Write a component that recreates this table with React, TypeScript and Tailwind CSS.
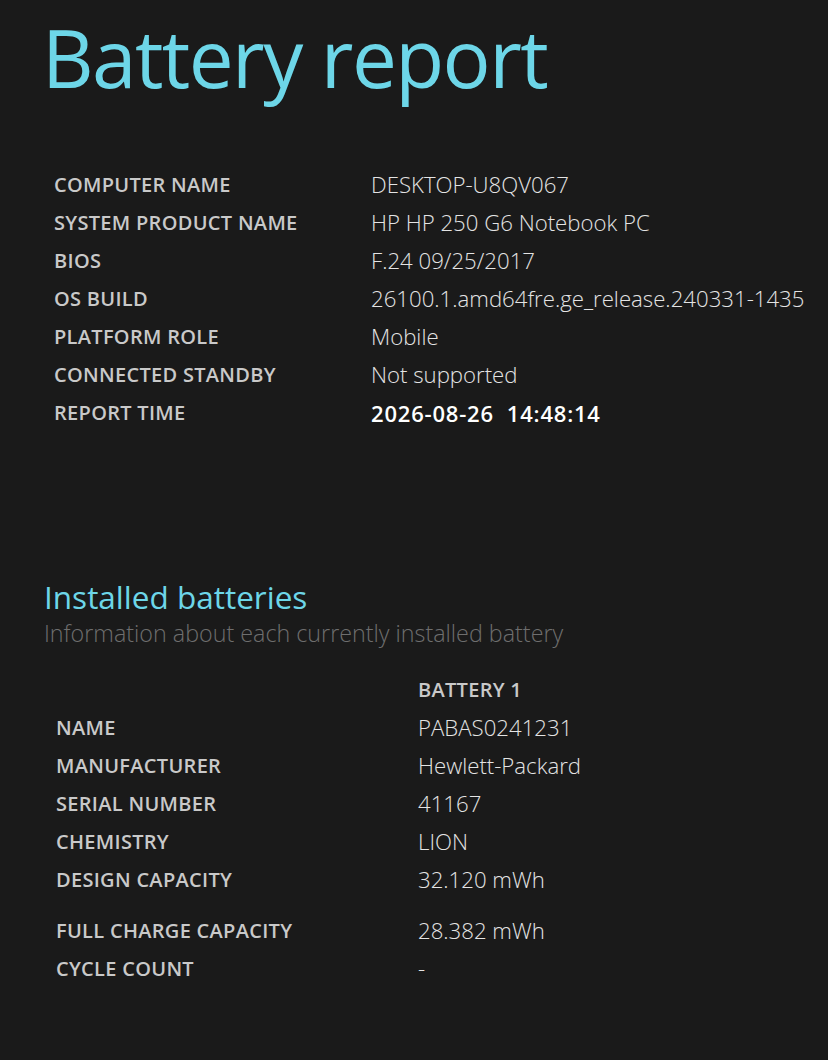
import React from "react";

const font = { fontFamily: '"Open Sans", "Noto Sans", sans-serif' };

const systemRows: [string, string][] = [
  ["COMPUTER NAME", "DESKTOP-U8QV067"],
  ["SYSTEM PRODUCT NAME", "HP HP 250 G6 Notebook PC"],
  ["BIOS", "F.24 09/25/2017"],
  ["OS BUILD", "26100.1.amd64fre.ge_release.240331-1435"],
  ["PLATFORM ROLE", "Mobile"],
  ["CONNECTED STANDBY", "Not supported"],
];

const batteryRows: [string, string][] = [
  ["NAME", "PABAS0241231"],
  ["MANUFACTURER", "Hewlett-Packard"],
  ["SERIAL NUMBER", "41167"],
  ["CHEMISTRY", "LION"],
  ["DESIGN CAPACITY", "32.120 mWh"],
];

function Label({ children }: { children: React.ReactNode }) {
  return (
    <div className="h-[38px] flex items-center text-[20px] font-semibold tracking-[0.3px] text-[#c9c9c9]">
      {children}
    </div>
  );
}

function Value({ children, bold }: { children: React.ReactNode; bold?: boolean }) {
  return (
    <div
      className={
        bold
          ? "h-[38px] flex items-center text-[22px] font-semibold tracking-[0.8px] text-white"
          : "h-[38px] flex items-center text-[22.2px] font-light text-[#e4e4e4]"
      }
    >
      {children}
    </div>
  );
}

export default function App() {
  return (
    <div className="min-h-[1060px] w-full bg-[#1a1a1a] overflow-hidden" style={font}>
      {/* Title */}
      <h1 className="pl-[42px] pt-[2px] h-[120px] text-[80px] font-normal tracking-[-1.6px] leading-[110px] text-[#6dd6e8]">
        Battery report
      </h1>

      {/* System info */}
      <div className="mt-[46px] pl-[54px] grid grid-cols-[317px_1fr]">
        {systemRows.map(([k, v]) => (
          <React.Fragment key={k}>
            <Label>{k}</Label>
            <Value>{v}</Value>
          </React.Fragment>
        ))}
        <Label>REPORT TIME</Label>
        <Value bold>
          <span className="whitespace-pre">2026-08-26  14:48:14</span>
        </Value>
      </div>

      {/* Installed batteries */}
      <div className="mt-[147px] pl-[44px]">
        <h2 className="text-[31.5px] leading-[36px] text-[#6dd6e8]">Installed batteries</h2>
        <p className="text-[23.3px] leading-[36px] font-light text-[#6e6e6e]">
          Information about each currently installed battery
        </p>
      </div>

      <div className="mt-[20px] pl-[56px] grid grid-cols-[362px_1fr]">
        <div className="h-[38px]" />
        <Label>BATTERY 1</Label>
        {batteryRows.map(([k, v]) => (
          <React.Fragment key={k}>
            <Label>{k}</Label>
            <Value>{v}</Value>
          </React.Fragment>
        ))}
        <div className="col-span-2 h-[13px]" />
        <Label>FULL CHARGE CAPACITY</Label>
        <Value>28.382 mWh</Value>
        <Label>CYCLE COUNT</Label>
        <Value>-</Value>
      </div>
    </div>
  );
}
